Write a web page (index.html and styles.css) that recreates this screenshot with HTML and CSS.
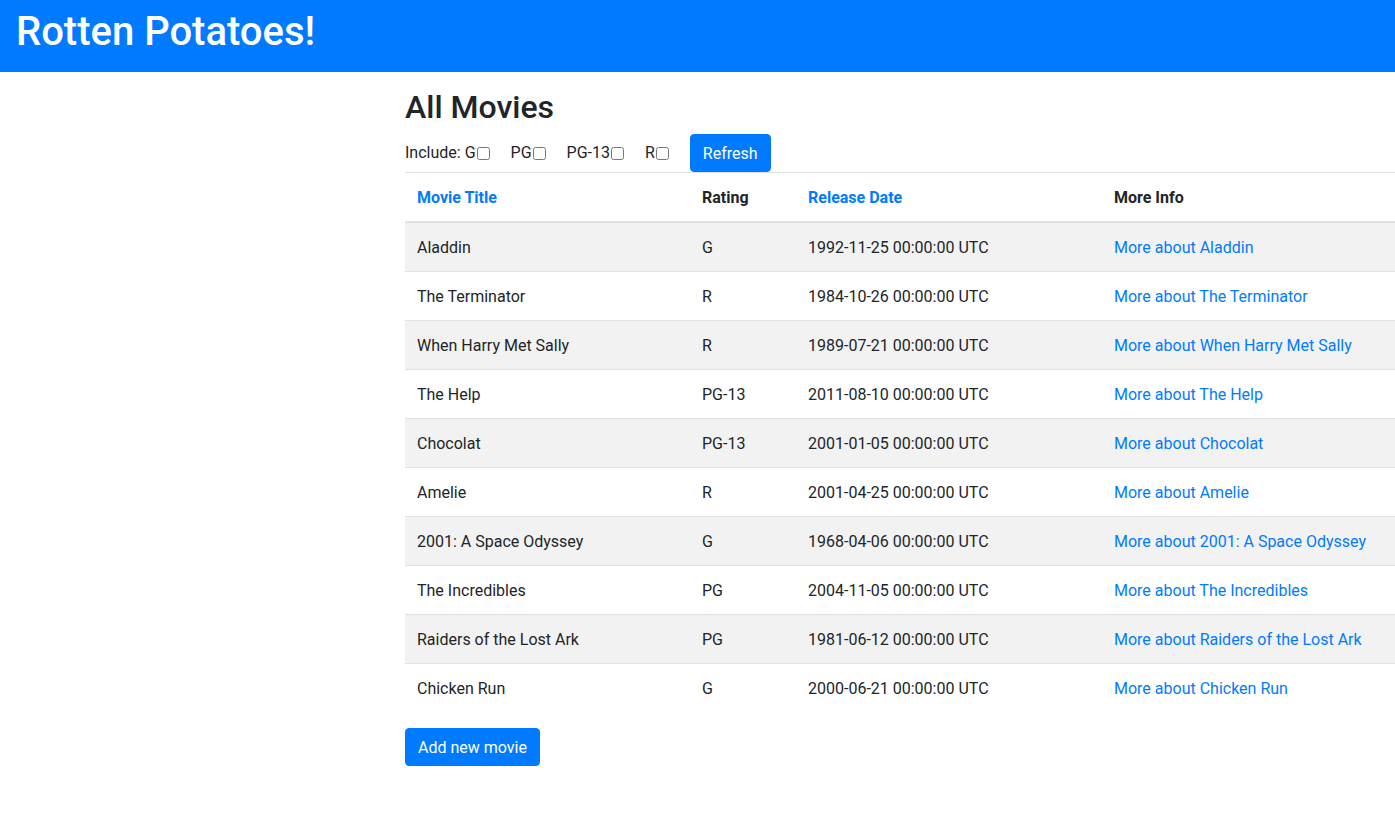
FILE: index.html
```html
<!DOCTYPE html>
<html lang="en">
<head>
<meta charset="utf-8">
<title>Rotten Potatoes!</title>
<link rel="stylesheet" href="styles.css">
</head>
<body>
<header class="topbar">
  <h1 class="brand">Rotten Potatoes!</h1>
</header>
<main class="content">
  <h2 class="page-title">All Movies</h2>
  <form class="filter">
    <span class="filter-item">Include: G<input type="checkbox" class="cb"></span>
    <span class="filter-item">PG<input type="checkbox" class="cb"></span>
    <span class="filter-item">PG-13<input type="checkbox" class="cb"></span>
    <span class="filter-item">R<input type="checkbox" class="cb"></span>
    <button type="button" class="btn">Refresh</button>
  </form>
  <table class="movies">
    <colgroup>
      <col class="c-title">
      <col class="c-rating">
      <col class="c-date">
      <col class="c-info">
    </colgroup>
    <thead>
      <tr>
        <th><a href="#" class="link">Movie Title</a></th>
        <th>Rating</th>
        <th><a href="#" class="link">Release Date</a></th>
        <th>More Info</th>
      </tr>
    </thead>
    <tbody>
      <tr><td>Aladdin</td><td>G</td><td>1992-11-25 00:00:00 UTC</td><td><a href="#" class="link">More about Aladdin</a></td></tr>
      <tr><td>The Terminator</td><td>R</td><td>1984-10-26 00:00:00 UTC</td><td><a href="#" class="link">More about The Terminator</a></td></tr>
      <tr><td>When Harry Met Sally</td><td>R</td><td>1989-07-21 00:00:00 UTC</td><td><a href="#" class="link">More about When Harry Met Sally</a></td></tr>
      <tr><td>The Help</td><td>PG-13</td><td>2011-08-10 00:00:00 UTC</td><td><a href="#" class="link">More about The Help</a></td></tr>
      <tr><td>Chocolat</td><td>PG-13</td><td>2001-01-05 00:00:00 UTC</td><td><a href="#" class="link">More about Chocolat</a></td></tr>
      <tr><td>Amelie</td><td>R</td><td>2001-04-25 00:00:00 UTC</td><td><a href="#" class="link">More about Amelie</a></td></tr>
      <tr><td>2001: A Space Odyssey</td><td>G</td><td>1968-04-06 00:00:00 UTC</td><td><a href="#" class="link">More about 2001: A Space Odyssey</a></td></tr>
      <tr><td>The Incredibles</td><td>PG</td><td>2004-11-05 00:00:00 UTC</td><td><a href="#" class="link">More about The Incredibles</a></td></tr>
      <tr><td>Raiders of the Lost Ark</td><td>PG</td><td>1981-06-12 00:00:00 UTC</td><td><a href="#" class="link">More about Raiders of the Lost Ark</a></td></tr>
      <tr><td>Chicken Run</td><td>G</td><td>2000-06-21 00:00:00 UTC</td><td><a href="#" class="link">More about Chicken Run</a></td></tr>
    </tbody>
  </table>
  <button type="button" class="btn">Add new movie</button>
</main>
</body>
</html>
```
FILE: styles.css
```css
* { box-sizing: border-box; }
html, body {
  margin: 0;
  padding: 0;
}
body {
  font-family: Roboto, "Liberation Sans", sans-serif;
  font-size: 16px;
  line-height: 1.5;
  color: #212529;
  background: #fff;
}
.topbar {
  background: #007bff;
  height: 72px;
  padding: 8px 16px 16px;
}
.brand {
  margin: 0;
  font-size: 40px;
  font-weight: 500;
  line-height: 48px;
  color: #fff;
}
.content {
  margin-left: 405px;
  padding-bottom: 40px;
}
.page-title {
  margin: 16px 0 8px;
  font-size: 32px;
  font-weight: 500;
  line-height: 1.2;
}
.filter {
  display: flex;
  align-items: center;
  margin: 0;
}
.filter-item {
  display: inline-flex;
  align-items: center;
  margin-right: 21px;
}
.cb {
  margin: 0 0 0 1px;
  width: 13px;
  height: 13px;
}
.btn {
  display: inline-block;
  font-family: inherit;
  font-size: 16px;
  line-height: 24px;
  padding: 7px 12px 5px;
  color: #fff;
  background: #007bff;
  border: 1px solid #007bff;
  border-radius: 4px;
  cursor: pointer;
}
.movies {
  width: 990px;
  border-collapse: collapse;
  margin-bottom: 16px;
  table-layout: fixed;
}
.c-title { width: 285px; }
.c-rating { width: 106px; }
.c-date { width: 306px; }
.c-info { width: 293px; }
.movies th,
.movies td {
  padding: 13px 12px 11px;
  text-align: left;
  vertical-align: top;
  border-top: 1px solid #dee2e6;
  white-space: nowrap;
}
.movies th {
  font-weight: 700;
  vertical-align: bottom;
  border-bottom: 2px solid #dee2e6;
}
.movies tbody tr:nth-child(odd) {
  background: #f2f2f2;
}
.movies tbody tr:first-child td {
  border-top: 0;
}
.link {
  color: #007bff;
  text-decoration: none;
}
```
